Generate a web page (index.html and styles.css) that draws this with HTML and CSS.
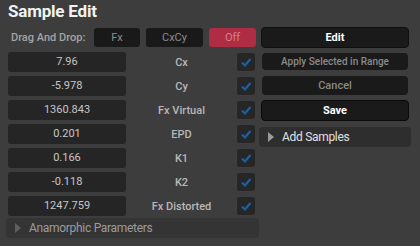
FILE: index.html
```html
<!DOCTYPE html>
<html>
<head>
<meta charset="utf-8">
<link rel="stylesheet" href="styles.css">
</head>
<body>
<div class="panel">
  <div class="title">Sample Edit</div>
  <div class="main">
    <div class="left">
      <div class="dnd">
        <span class="dnd-label">Drag And Drop:</span>
        <span class="chip chip-fx">Fx</span>
        <span class="chip chip-cxcy">CxCy</span>
        <span class="chip chip-off">Off</span>
      </div>
      <div class="rows">
        <div class="row"><div class="val">7.96</div><div class="lbl">Cx</div><div class="cb"><svg viewBox="0 0 18 18"><path d="M5 9.5 L8 12.5 L13.5 6"/></svg></div></div>
        <div class="row"><div class="val">-5.978</div><div class="lbl">Cy</div><div class="cb"><svg viewBox="0 0 18 18"><path d="M5 9.5 L8 12.5 L13.5 6"/></svg></div></div>
        <div class="row"><div class="val">1360.843</div><div class="lbl">Fx Virtual</div><div class="cb"><svg viewBox="0 0 18 18"><path d="M5 9.5 L8 12.5 L13.5 6"/></svg></div></div>
        <div class="row"><div class="val">0.201</div><div class="lbl">EPD</div><div class="cb"><svg viewBox="0 0 18 18"><path d="M5 9.5 L8 12.5 L13.5 6"/></svg></div></div>
        <div class="row"><div class="val">0.166</div><div class="lbl">K1</div><div class="cb"><svg viewBox="0 0 18 18"><path d="M5 9.5 L8 12.5 L13.5 6"/></svg></div></div>
        <div class="row"><div class="val">-0.118</div><div class="lbl">K2</div><div class="cb"><svg viewBox="0 0 18 18"><path d="M5 9.5 L8 12.5 L13.5 6"/></svg></div></div>
        <div class="row"><div class="val">1247.759</div><div class="lbl">Fx Distorted</div><div class="cb"><svg viewBox="0 0 18 18"><path d="M5 9.5 L8 12.5 L13.5 6"/></svg></div></div>
      </div>
      <div class="section section-anam"><span class="tri tri-dim"></span><span>Anamorphic Parameters</span></div>
    </div>
    <div class="right">
      <div class="btn btn-edit">Edit</div>
      <div class="btn btn-apply">Apply Selected in Range</div>
      <div class="btn btn-cancel">Cancel</div>
      <div class="btn btn-save">Save</div>
      <div class="section section-add"><span class="tri"></span><span>Add Samples</span></div>
    </div>
  </div>
</div>
</body>
</html>
```
FILE: styles.css
```css
html, body {
  margin: 0;
  padding: 0;
  background: #3d3d3d;
  width: 420px;
  height: 246px;
  overflow: hidden;
  font-family: Roboto, "Liberation Sans", sans-serif;
}
.panel {
  padding: 0 0 0 8px;
}
.title {
  color: #f2f2f2;
  font-weight: bold;
  font-size: 17px;
  height: 27px;
  line-height: 23px;
  letter-spacing: -0.2px;
}
.main {
  display: flex;
  gap: 5px;
}
.left {
  width: 248px;
  display: flex;
  flex-direction: column;
}
.dnd {
  display: flex;
  align-items: center;
  height: 21px;
}
.dnd-label {
  color: #a4a4a4;
  font-size: 11px;
  font-weight: 500;
  margin-left: 3px;
  width: 83px;
}
.chip {
  height: 19px;
  line-height: 19px;
  text-align: center;
  font-size: 11px;
  color: #8c8c8c;
  background: #191919;
  border-radius: 3px;
}
.chip-fx { width: 46px; }
.chip-cxcy { width: 57px; margin-left: 6px; }
.chip-off { width: 47px; margin-left: 6px; background: #ae2d45; color: #d8808f; }
.rows {
  margin-top: 4px;
  display: flex;
  flex-direction: column;
  gap: 4px;
}
.row {
  display: flex;
  align-items: center;
  height: 20px;
}
.val {
  width: 118px;
  height: 20px;
  line-height: 20px;
  background: #252525;
  border-radius: 3px;
  color: #c6c6c6;
  font-size: 11px;
  text-align: center;
}
.lbl {
  width: 111px;
  text-align: center;
  color: #b8b8b8;
  font-size: 11px;
  font-weight: 500;
}
.cb {
  width: 18px;
  height: 18px;
  background: #262626;
  border-radius: 3px;
}
.cb svg {
  width: 18px;
  height: 18px;
  display: block;
}
.cb path {
  fill: none;
  stroke: #1f5f9f;
  stroke-width: 2.2;
}
.section {
  display: flex;
  align-items: center;
  height: 20px;
  border-radius: 4px;
  font-size: 12px;
  letter-spacing: -0.3px;
}
.section-anam {
  margin: 2px -3px 0 -2px;
  background: #343434;
  color: #9c9c9c;
}
.tri {
  width: 0;
  height: 0;
  border-top: 5px solid transparent;
  border-bottom: 5px solid transparent;
  border-left: 6px solid #9a9a9a;
  margin: 0 8px 0 9px;
}
.tri-dim {
  border-left-color: #5e5e5e;
}
.right {
  width: 148px;
  display: flex;
  flex-direction: column;
}
.btn {
  text-align: center;
  border-radius: 4px;
  background: #1a1a1a;
  font-size: 11px;
  box-sizing: border-box;
}
.btn-edit {
  height: 21px;
  line-height: 19px;
  border: 1px solid #0f0f0f;
  color: #ffffff;
  font-weight: bold;
}
.btn-apply {
  margin: 5px 1px 0;
  height: 17px;
  line-height: 17px;
  color: #8a8a8a;
  font-size: 10px;
  font-weight: 500;
}
.btn-cancel {
  margin: 6px 1px 0;
  height: 19px;
  line-height: 19px;
  color: #888888;
  font-weight: 500;
}
.btn-save {
  margin-top: 5px;
  height: 21px;
  line-height: 19px;
  border: 1px solid #0a0a0a;
  color: #ffffff;
  font-weight: bold;
}
.section-add {
  margin: 6px -2px 0;
  background: #2e2e2e;
  color: #e0e0e0;
}
```
